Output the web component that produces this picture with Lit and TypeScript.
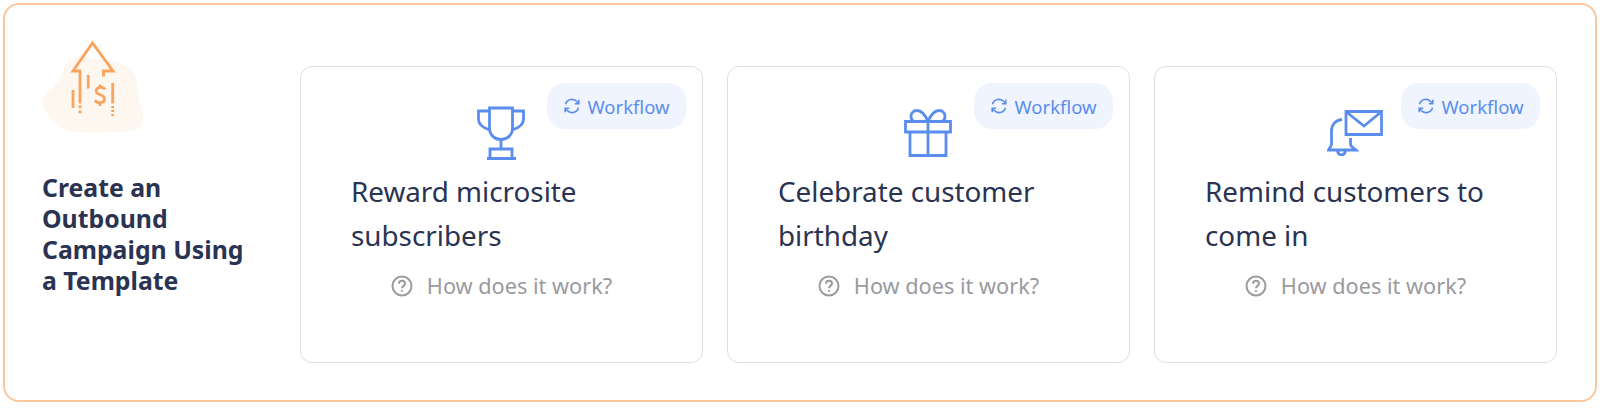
import { LitElement, css, html, svg } from 'lit';
import { customElement } from 'lit/decorators.js';

const trophy = svg`<svg class="art" width="48" height="54" viewBox="0 0 48 54">
  <path d="M12.5 2h23v20c0 7-5 11.500-11.500 11.500S12.500 29 12.500 22z"/>
  <path d="M12.500 5H1.500v8.500c0 5 5 8.500 11.500 10.500M35.500 5h11v8.500c0 5-5 8.500-11.500 10.500"/>
  <path d="M24 33.500V43M13 52V43h22v9M10 52.500h29"/>
</svg>`;

const gift = svg`<svg class="art" width="48" height="48" viewBox="0 0 48 48">
  <path d="M1.500 12.500h45v10.500h-45zM6 23v23.500h36V23M24 12.500v34"/>
  <path d="M24 12.500c-3-7-7-11-11-11-4 0-6 3-6 6 0 2.500 1 4 3 5M24 12.500c3-7 7-11 11-11 4 0 6 3 6 6 0 2.500-1 4-3 5"/>
</svg>`;

const bell = svg`<svg class="art" width="56" height="46" viewBox="0 0 56 46">
  <path d="M19 1.500h35.500v23H19zM19.500 2l17.500 14L54 2"/>
  <path d="M15 9.500C8.500 10 4.500 15 4.500 21V34C4.500 37 2 38 1.500 40H29C27 38 23.500 37 23.500 34V28"/>
  <path d="M10.500 41c.5 2.500 2.200 3.800 4 3.800s3.500-1.300 4-3.800"/>
</svg>`;

const growth = svg`<svg class="growth" width="120" height="105" viewBox="0 0 120 105">
  <path class="blob" d="M13 63C17 55 28 51 33 37C36 26 45 20 56 22C68 25 76 25 86 27C100 31 108 40 107 51C108 64 113 76 113 85C112 95 101 96 90 97C72 98 52 98 41 97C30 93 20 84 13 72Z"/>
  <g class="lines">
    <path d="M50 68.500V36H43L62.500 8L83 36H73.500V41.500"/>
    <path d="M43 55V73M58.300 40V53.500M82.700 48V68.500"/>
    <path d="M50 70.300v2.600M50 75.600v2.600M82.700 71v2M82.700 75v2M82.700 79v2"/>
    <path d="M75 54.500c-1-2.500-6-3-8-.8c-2 2.300-.5 5 2.500 5.800c3.500 1 6 3 4.800 6c-1.300 3-7.300 3-9.300-.3M70 49.500v3M70 68v3"/>
  </g>
</svg>`;

const sync = svg`<svg class="sync" width="16" height="16" viewBox="0 0 16 16">
  <path d="M1.500 6.300A6.700 6.700 0 0 1 13 3.700L14.700 5.700M14.800 1.800v4h-4"/>
  <path d="M14.500 9.700A6.700 6.700 0 0 1 3 12.300L1.300 10.300M1.200 14.200v-4h4"/>
</svg>`;

const help = svg`<svg class="help" width="22" height="22" viewBox="0 0 22 22">
  <circle cx="11" cy="11" r="9.500"/>
  <path d="M8 8.700c0-1.800 1.400-2.900 3-2.900s3 1 3 2.700c0 2.500-3 2.300-3 4.700"/>
  <circle class="dot" cx="11" cy="16" r="1.100"/>
</svg>`;

@customElement('app-root')
export class AppRoot extends LitElement {
  static styles = css`
    :host {
      display: block;
      font-family: 'Noto Sans', 'Open Sans', sans-serif;
    }

    .panel {
      box-sizing: border-box;
      height: 399px;
      margin: 3px 3px 0;
      padding: 61px 39px 0 37px;
      display: flex;
      background: #fff;
      border: 2px solid #fbc79c;
      border-radius: 16px;
    }

    .intro {
      width: 258px;
      flex: none;
    }

    .growth {
      display: block;
      margin: -31px 0 0 -12px;
    }

    .intro h2 {
      margin: 32px 0 0;
      width: 215px;
      color: #2a3352;
      font-size: 24.800px;
      font-weight: 700;
      line-height: 31px;
    }

    .cards {
      flex: 1;
      display: grid;
      grid-template-columns: repeat(3, 403px);
      column-gap: 24px;
      align-items: start;
    }

    .card {
      box-sizing: border-box;
      position: relative;
      height: 297px;
      padding: 39px 0 0;
      display: flex;
      flex-direction: column;
      border: 1px solid #dedee2;
      border-radius: 12px;
    }

    .badge {
      position: absolute;
      top: 16px;
      right: 16px;
      box-sizing: border-box;
      width: 139px;
      height: 46px;
      padding-left: 1px;
      display: flex;
      align-items: center;
      justify-content: center;
      gap: 7px;
      color: #5b8def;
      background: #eff4fe;
      border-radius: 18px;
      font-size: 18.500px;
    }

    .art-box {
      height: 54px;
      display: flex;
      align-items: center;
      justify-content: center;
      padding-right: 2px;
    }

    .art,
    .sync,
    .help,
    .lines {
      fill: none;
      stroke-width: 2;
    }

    .art {
      stroke: #5b8def;
      stroke-width: 2.800;
    }

    .sync {
      stroke: #5b8def;
      stroke-width: 1.600;
    }

    .help {
      stroke: #9a9a9f;
    }

    .help .dot {
      fill: #9a9a9f;
      stroke: none;
    }

    .blob {
      fill: #fef7f0;
    }

    .lines {
      stroke: #f9a35c;
      stroke-width: 2.800;
    }

    .card h3 {
      margin: 9px 0 0;
      padding: 0 40px 0 50px;
      color: #2a3352;
      font-size: 27.800px;
      font-weight: 400;
      line-height: 44px;
    }

    .how {
      margin-top: 14px;
      display: flex;
      align-items: center;
      justify-content: center;
      gap: 14px;
      color: #9a9a9f;
      font-size: 21.700px;
      line-height: 30px;
    }
  `;

  private cards = [
    { title: 'Reward microsite subscribers', art: trophy },
    { title: 'Celebrate customer birthday', art: gift },
    { title: 'Remind customers to come in', art: bell },
  ];

  render() {
    return html`
      <div class="panel">
        <div class="intro">
          ${growth}
          <h2>Create an Outbound Campaign Using a Template</h2>
        </div>
        <div class="cards">
          ${this.cards.map(
            (c) => html`
              <div class="card">
                <div class="badge">${sync}<span>Workflow</span></div>
                <div class="art-box">${c.art}</div>
                <h3>${c.title}</h3>
                <div class="how">${help}<span>How does it work?</span></div>
              </div>
            `
          )}
        </div>
      </div>
    `;
  }
}
